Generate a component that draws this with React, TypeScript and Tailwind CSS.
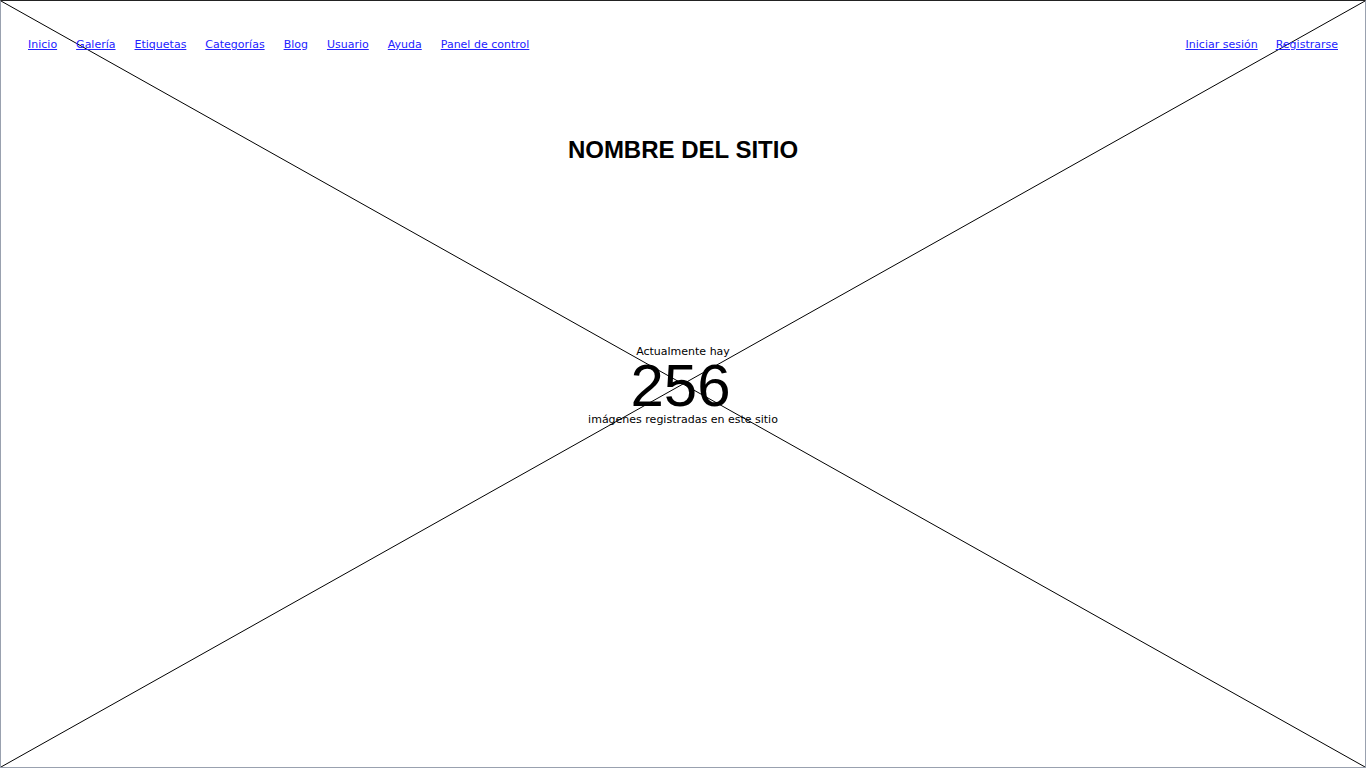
const leftLinks = ["Inicio", "Galería", "Etiquetas", "Categorías", "Blog", "Usuario", "Ayuda", "Panel de control"];
const rightLinks = ["Iniciar sesión", "Registrarse"];

const App = () => {
  return (
    <div className="relative w-full h-[768px] bg-white border border-gray-400 border-t-[#222] overflow-hidden font-['DejaVu_Sans',sans-serif]">
      {/* image placeholder cross */}
      <svg className="absolute inset-0 w-full h-full pointer-events-none" preserveAspectRatio="none" viewBox="0 0 100 100">
        <line x1="0" y1="0" x2="100" y2="100" stroke="#000" strokeWidth="1" vectorEffect="non-scaling-stroke" />
        <line x1="100" y1="0" x2="0" y2="100" stroke="#000" strokeWidth="1" vectorEffect="non-scaling-stroke" />
      </svg>

      <div className="relative flex flex-col h-full">
        {/* Nav */}
        <nav className="flex items-center justify-between h-[88px] px-[27px] text-[11px]">
          <div className="flex items-center gap-[19px]">
            {leftLinks.map((link) => (
              <a key={link} href="#" className="text-[#2222ff] underline">
                {link}
              </a>
            ))}
          </div>
          <div className="flex items-center gap-[18px]">
            {rightLinks.map((link) => (
              <a key={link} href="#" className="text-[#2222ff] underline">
                {link}
              </a>
            ))}
          </div>
        </nav>

        {/* Title */}
        <div className="flex items-center justify-center h-[40px] mt-[41px]">
          <h1 className="text-[24px] font-bold text-black font-['Liberation_Sans',sans-serif]">
            NOMBRE DEL SITIO
          </h1>
        </div>

        {/* Counter */}
        <div className="flex-1 flex items-center justify-center pb-[166px]">
          <div className="flex flex-col items-center text-black">
            <p className="text-[11px] leading-[14px]">Actualmente hay</p>
            <p className="text-[60px] leading-[54px] mr-[5px] font-['Liberation_Sans',sans-serif]">256</p>
            <p className="text-[11px] leading-[14px]">imágenes registradas en este sitio</p>
          </div>
        </div>
      </div>
    </div>
  );
};

export default App;
